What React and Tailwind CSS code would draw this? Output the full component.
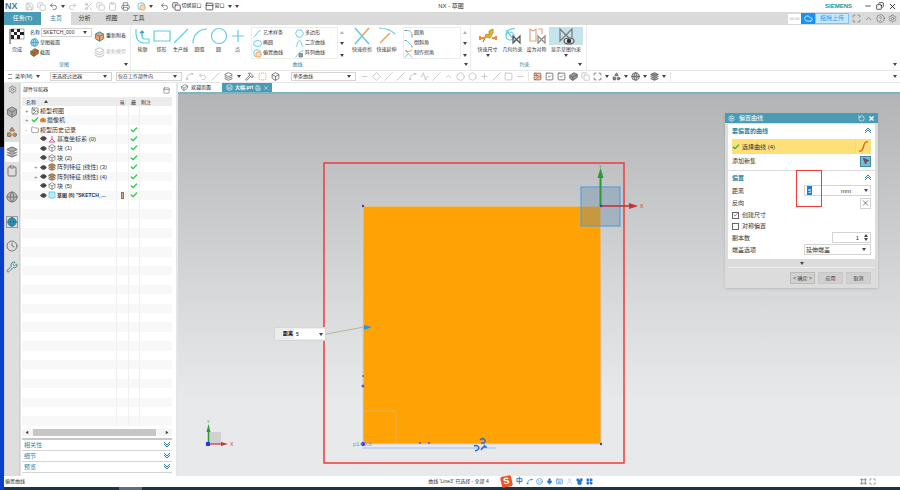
import clsx from 'clsx';
import {
  Box, Camera, Check, ChevronUp, CircleHelp, Circle, Clipboard, Clock, Cloud, Copy, Cuboid,
  Diamond, Eye, Folder, Globe, Hammer, Image, Keyboard, Layers, Maximize, Mic, Minus,
  MousePointer2, MoveDiagonal, PanelTop, Plus, Redo2, RotateCcw, Save, Scissors,
  Settings, Shapes, Shirt, Smile, Spline, Square, SquareCheck, SquareDashed, Undo2,
  User, X, LayoutGrid, Printer, Slash, Activity, Hexagon, Frame, Wrench, Minimize2,
} from 'lucide-react';

const treeRows = [
  { name: '模型视图', expand: '+', level: 0, icon: 'view' },
  { name: '摄像机', expand: '+', level: 0, icon: 'camera' },
  { name: '模型历史记录', expand: '-', level: 0, icon: 'folder', ok: true },
  { name: '基准坐标系 (0)', level: 1, icon: 'datum', ok: true },
  { name: '块 (1)', level: 1, icon: 'block', ok: true },
  { name: '块 (2)', level: 1, icon: 'block', ok: true },
  { name: '阵列特征 [线性] (3)', expand: '+', level: 1, icon: 'pattern', ok: true },
  { name: '阵列特征 [线性] (4)', expand: '+', level: 1, icon: 'pattern', ok: true },
  { name: '块 (5)', level: 1, icon: 'block', ok: true },
  { name: '草图 (6) "SKETCH_...', level: 1, icon: 'sketch', ok: true, current: true },
];
const emptyRows = Array.from({ length: 24 }, (_, i) => i);

function Caret({ className }) {
  return (
    <svg viewBox="0 0 4 3" className={clsx('h-[3px] w-1 shrink-0 fill-[#444]', className)}>
      <path d="M0 0h4L2 3z" />
    </svg>
  );
}

function Dropdown({ label, value, className }) {
  return (
    <span className={clsx('flex items-center border border-[#d4d4d4] bg-white pr-1', className)}>
      <select aria-label={label} className="h-full min-w-0 flex-1 appearance-none px-px outline-none">
        <option>{value}</option>
      </select>
      <Caret />
    </span>
  );
}

/* ========== リボン用アイコン ========== */
function CurveIcon({ kind, className = 'size-[18px]' }) {
  const blue = '#62cde6';
  return (
    <svg viewBox="0 0 18 18" fill="none" stroke={blue} strokeWidth="1.2" className={className}>
      {kind === 'profile' && (
        <>
          <path d="M2 2v5c0 5 3 9 8 9h5v-4h-4c-2 0-3-1-3-3" />
          <path d="M8 9V4M6 6l2-2 2 2" stroke="#2d9fd0" />
        </>
      )}
      {kind === 'rect' && <path d="M1 4h16v10H1z" />}
      {kind === 'line' && <path d="M2 16 16 2" />}
      {kind === 'arc' && <path d="M2 16C2 8 8 2 16 2" />}
      {kind === 'circle' && <circle cx="9" cy="9" r="7.5" />}
      {kind === 'point' && <path d="M9 3v12M3 9h12" />}
      {kind === 'spline' && <path d="M1 16C7 15 6 5 16 3" strokeWidth="2" />}
      {kind === 'ellipse' && <ellipse cx="9" cy="9" rx="8" ry="6" strokeWidth="2" />}
      {kind === 'offset' && (
        <>
          <rect x="2" y="2" width="13" height="13" rx="4" strokeWidth="2" />
          <rect x="6" y="6" width="10" height="10" rx="3" stroke="#f2a45c" fill="#fbd9b4" strokeWidth="2" />
        </>
      )}
      {kind === 'polygon' && <path d="M5 2h8l4 7-4 7H5L1 9z" strokeWidth="2" />}
      {kind === 'conic' && <path d="M2 16C5 13 5 3 9 3s4 10 7 13" strokeWidth="2" />}
      {kind === 'pattern' && (
        <>
          <path d="M1 16C6 14 8 4 16 3" strokeWidth="2" />
          <path d="M8 9h7v7H8z" stroke="#666" fill="#999" />
        </>
      )}
      {kind === 'trim' && (
        <>
          <path d="m2 1 14 16M9 9l-7 8" strokeWidth="1.6" />
          <path d="m9 9 7-8" stroke="#f2a45c" strokeWidth="1.6" />
        </>
      )}
      {kind === 'extend' && (
        <>
          <path d="M1 1c6 0 12 2 16 6" />
          <path d="M2 16 12 6" stroke="#f2a45c" strokeWidth="1.6" />
        </>
      )}
      {kind === 'fillet' && (
        <>
          <path d="M1 3h5M16 11v6" stroke="#888" strokeWidth="2" />
          <path d="M6 3c6 0 10 3 10 9" strokeWidth="2" />
        </>
      )}
      {kind === 'chamfer' && (
        <>
          <path d="M1 3h4M16 14v3" stroke="#888" strokeWidth="2" />
          <path d="m5 3 11 11" strokeWidth="2" />
        </>
      )}
      {kind === 'corner' && (
        <>
          <path d="m2 2 14 15M9 9l-7 8" strokeWidth="2" />
          <path d="M3 2c2 4 10 4 13-1" stroke="#f08030" strokeWidth="2" />
        </>
      )}
      {kind === 'dimension' && (
        <>
          <path d="M1 11h4M13 11h4M1 9v4M17 9v4" stroke="#f08a3c" strokeWidth="2" />
          <path d="m4 15 3-8 3 1V4l4-2v4l-3 5-4-1z" fill="#e8b422" stroke="#a67c10" strokeWidth=".7" />
        </>
      )}
      {kind === 'geometric' && (
        <>
          <path d="M2 8C2 3 8 1 11 2M2 3l9 11" />
          <circle cx="6" cy="9" r="4" />
          <path d="M9 9v7l7-7v7z" stroke="#555" />
        </>
      )}
      {kind === 'symmetric' && (
        <>
          <path d="M2 14V2l3 2 3-2v12zM10 2h4v5" stroke="#e0a58a" />
          <path d="M10 9v7l7-7v7z" stroke="#888" />
        </>
      )}
      {kind === 'show' && (
        <>
          <path d="M3 2v12L15 2v12z" stroke="#777" />
          <ellipse cx="12" cy="14" rx="5" ry="3" fill="#ddd" stroke="#555" />
          <circle cx="12" cy="14" r="1.6" fill="#333" stroke="#333" />
        </>
      )}
    </svg>
  );
}

function CheckeredFlag() {
  return (
    <svg viewBox="0 0 16 16" className="size-4">
      <path d="M1 1v15" stroke="#444" />
      <path d="M2 1h13v10H2z" fill="#fff" stroke="#555" strokeWidth=".5" />
      <path d="M2 1h3v3H2zM8 1h3v3H8zM5 4h3v3H5zM11 4h4v3h-4zM2 7h3v4H2zM8 7h3v4H8z" fill="#222" />
    </svg>
  );
}

function TallButton({ kind, label, className, caret }) {
  return (
    <button className={clsx('flex shrink-0 flex-col items-center', className)}>
      <CurveIcon kind={kind} />
      <span className="mt-px whitespace-nowrap leading-[7px]">{label}</span>
      {caret && <Caret className="mt-px" />}
    </button>
  );
}

function SmallButton({ kind, label }) {
  return (
    <button className="flex items-center gap-px whitespace-nowrap">
      <CurveIcon kind={kind} className="size-[9px] shrink-0" />
      {label}
    </button>
  );
}

function GalleryScroll() {
  return (
    <div className="flex w-2 flex-col items-center justify-around">
      <Caret className="rotate-180 opacity-40" />
      <Caret />
      <Caret />
    </div>
  );
}

function TitleBar() {
  const icon = 'size-[9px] shrink-0';
  return (
    <header className="flex h-3 items-center bg-white text-[5px]">
      <div className="flex flex-1 items-center gap-[3px] pl-px text-[#666]">
        <span className="mr-1 text-[9px] font-bold leading-3 text-[#4a7a92]">NX</span>
        <Save className={clsx(icon, 'text-[#bbb]')} />
        <Copy className={clsx(icon, 'text-[#bbb]')} />
        <Undo2 className={icon} />
        <Caret />
        <Redo2 className={clsx(icon, 'text-[#bbb]')} />
        <Scissors className={clsx(icon, 'ml-1 text-[#bbb]')} />
        <Copy className={clsx(icon, 'text-[#bbb]')} />
        <Clipboard className={clsx(icon, 'text-[#bbb]')} />
        <Printer className={clsx(icon, 'ml-px')} />
        <CurveIcon kind="offset" className="ml-1 size-[9px]" />
        <Caret />
        <Undo2 className={clsx(icon, 'ml-1')} />
        <button className="flex items-center gap-px whitespace-nowrap text-[#333]">
          <Copy className={icon} />切换窗口
        </button>
        <button className="flex items-center gap-px whitespace-nowrap text-[#333]">
          <PanelTop className={icon} />窗口
        </button>
        <Caret />
        <Caret />
      </div>
      <h1 className="text-[6px] text-[#333]">NX - 草图</h1>
      <div className="flex flex-1 items-center justify-end gap-1 pr-[3px]">
        <span className="mr-2 text-[6px] font-bold text-[#159a94]">SIEMENS</span>
        <button aria-label="最小化"><Minus className="size-2" /></button>
        <button aria-label="还原"><Copy className="size-2 rotate-90" /></button>
        <button aria-label="关闭"><X className="size-[9px]" /></button>
      </div>
    </header>
  );
}

function RibbonTabs() {
  return (
    <nav className="flex h-[13px] items-stretch bg-[#dadada] text-[6px] text-[#333]">
      <button className="w-[37px] bg-[#4a9cb6] text-white">任务(T)</button>
      <button className="w-[30px] bg-white text-[#2a86a5]">主页</button>
      <button className="w-[27px]">分析</button>
      <button className="w-[27px]">视图</button>
      <button className="w-[27px]">工具</button>
      <div className="ml-auto flex items-center pr-[3px] text-[#777]">
        <span className="h-[10px] w-[13px] bg-white text-center text-[4px] leading-[10px] text-[#aaa]">00:00</span>
        <span className="flex h-[11px] w-[14px] items-center justify-center bg-[#1890fa] text-white">
          <Cloud className="size-[9px]" />
        </span>
        <button className="h-[11px] w-[34px] border border-[#7cc4f5] bg-[#c4e8fd] text-[6px] leading-[9px] text-[#2d9ff0]">拖拽上传</button>
        <Maximize className="ml-[3px] size-[9px]" />
        <ChevronUp className="ml-[3px] size-[9px]" />
        <CircleHelp className="ml-[3px] size-[9px]" />
        <Settings className="ml-[3px] size-[9px]" />
      </div>
    </nav>
  );
}

function Ribbon() {
  return (
    <section className="flex h-[45px] items-stretch bg-white text-[5px] text-[#333]">
      {/* 草图 */}
      <div className="flex w-[124px] flex-col">
        <div className="flex h-9 pt-[3px]">
          <button className="flex w-[26px] flex-col items-center">
            <CheckeredFlag />
            <span className="mt-[2px] leading-[7px]">完成</span>
          </button>
          <div className="flex w-[62px] flex-col gap-px">
            <label className="flex h-[9px] items-center gap-px whitespace-nowrap">
              名称
              <Dropdown label="名称" value="SKETCH_000" className="h-[9px] min-w-0 flex-1" />
            </label>
            <button className="flex h-[9px] items-center gap-px">
              <Globe className="size-[9px] fill-[#a8d8ea] text-[#3a9ac0]" />草图截面
            </button>
            <button className="flex h-[9px] items-center gap-px">
              <Cuboid className="size-[9px] fill-[#d8622e] text-[#3d6b35]" />截面
            </button>
          </div>
          <div className="flex flex-1 flex-col pl-[2px]">
            <button className="flex h-4 items-center gap-px whitespace-nowrap">
              <Box className="size-[11px] fill-[#f0a060] text-[#3a8aa8]" />重新附着
            </button>
            <button className="flex h-4 items-center gap-px whitespace-nowrap text-[#bbb]">
              <Layers className="size-[11px]" />更新模型
            </button>
          </div>
        </div>
        <div className="flex items-center">
          <span className="flex-1 text-center text-[#2a7f9e]">草图</span>
          <Caret />
        </div>
      </div>

      {/* 曲线 */}
      <div className="ml-[2px] flex w-[340px] flex-col border-l border-[#ececec]">
        <div className="flex h-9 pl-[2px] pt-[2px]">
          <TallButton kind="profile" label="轮廓" className="w-[19px]" />
          <TallButton kind="rect" label="矩形" className="w-[19px]" />
          <TallButton kind="line" label="生产线" className="w-[19px]" />
          <TallButton kind="arc" label="圆弧" className="w-[19px]" />
          <TallButton kind="circle" label="圆" className="w-[19px]" />
          <TallButton kind="point" label="点" className="w-[19px]" />
          <div className="ml-1 grid h-8 w-[87px] grid-cols-2 border border-[#ececec] pl-px">
            <SmallButton kind="spline" label="艺术样条" />
            <SmallButton kind="polygon" label="多边形" />
            <SmallButton kind="ellipse" label="椭圆" />
            <SmallButton kind="conic" label="二次曲线" />
            <SmallButton kind="offset" label="偏置曲线" />
            <SmallButton kind="pattern" label="阵列曲线" />
          </div>
          <GalleryScroll />
          <TallButton kind="trim" label="快速修剪" className="ml-1 w-6" />
          <TallButton kind="extend" label="快速延伸" className="w-[25px]" />
          <div className="ml-1 grid h-8 w-[58px] grid-cols-1 border border-[#ececec]">
            <SmallButton kind="fillet" label="圆角" />
            <SmallButton kind="chamfer" label="倒斜角" />
            <SmallButton kind="corner" label="制作拐角" />
          </div>
          <GalleryScroll />
        </div>
        <div className="flex items-center pr-[2px]">
          <span className="flex-1 text-center text-[#2a7f9e]">曲线</span>
          <Caret />
        </div>
      </div>

      {/* 约束 */}
      <div className="flex w-[117px] flex-col border-x border-[#ececec]">
        <div className="flex h-9 pl-1 pt-[2px]">
          <TallButton kind="dimension" label="快速尺寸" className="w-[25px]" caret />
          <TallButton kind="geometric" label="几何约束" className="w-[25px]" />
          <TallButton kind="symmetric" label="设为对称" className="w-[23px]" />
          <button className="ml-px flex w-[34px] shrink-0 flex-col items-center">
            <span className="flex w-full justify-center bg-[#c5e3ea]"><CurveIcon kind="show" /></span>
            <span className="mt-px whitespace-nowrap leading-[7px]">显示草图约束</span>
            <Caret className="mt-px" />
          </button>
        </div>
        <div className="flex items-center pr-1">
          <span className="flex-1 text-center text-[#2a7f9e]">约束</span>
          <Caret />
        </div>
      </div>
      <Caret className="mb-1 ml-auto mr-[3px] self-end" />
    </section>
  );
}

function SelectionBar() {
  const dim = 'size-[9px] shrink-0 text-[#bbb]';
  const dark = 'size-[9px] shrink-0 text-[#555]';
  return (
    <section className="flex h-3 items-center border-t border-[#e8e8e8] bg-white text-[5px] text-[#333]">
      <button className="flex w-[46px] items-center gap-[3px] pl-1">
        <span className="h-[5px] w-1 border-y border-[#999]" />菜单(M)<Caret />
      </button>
      <Dropdown label="选择过滤器" value="无选择过滤器" className="h-[9px] w-[62px]" />
      <Dropdown label="选择范围" value="仅在工作部件内" className="ml-1 h-[9px] w-[66px]" />
      <div className="flex w-[109px] items-center gap-1 pl-[3px]">
        <Spline className={dim} />
        <Undo2 className={dim} />
        <Slash className={dim} />
        <Layers className={dark} />
        <Caret />
        <Hammer className={dark} />
        <SquareDashed className="size-[9px] shrink-0 text-[#ef8a3a]" />
        <Box className={dark} />
      </div>
      <Dropdown label="曲线规则" value="单条曲线" className="h-[9px] w-[65px]" />
      <div className="flex w-[172px] items-center gap-[3px] pl-1">
        <Minus className={dim} />
        <Diamond className={dim} />
        <Slash className={dim} />
        <Slash className={dim} />
        <Spline className={dim} />
        <Activity className={dim} />
        <Slash className={dim} />
        <ChevronUp className={dim} />
        <Circle className={dim} />
        <Hexagon className={dim} />
        <Plus className={dim} />
        <Slash className={dim} />
        <Square className={dim} />
        <Minus className={dim} />
      </div>
      <div className="flex items-center gap-[3px] border-x border-[#e8e8e8] px-1">
        <Image className="size-[9px] shrink-0 fill-[#f0c8a8] text-[#8a5a40]" />
        <SquareCheck className={dark} />
        <SquareCheck className={dark} />
        <Cuboid className={clsx(dark, 'fill-[#999]')} />
        <Copy className={dim} />
        <Maximize className={dark} />
        <Caret />
        <Shapes className={clsx(dark, 'fill-[#888]')} />
        <Caret />
        <Globe className={clsx(dark, 'fill-[#ccc]')} />
        <Caret />
        <Layers className={clsx(dark, 'fill-[#888]')} />
        <Caret />
      </div>
      <Caret className="ml-auto mr-[3px]" />
    </section>
  );
}

function ResourceBar() {
  const icon = 'size-3';
  return (
    <aside className="flex w-4 shrink-0 flex-col items-center border-x border-[#cfcfcf] bg-[#dedede] text-[#777]">
      <Settings className="mt-[2px] size-[9px]" />
      <button aria-label="装配导航器" className="mt-3"><Box className={clsx(icon, 'fill-[#aaa]')} /></button>
      <button aria-label="约束导航器" className="mt-2"><Shapes className={clsx(icon, 'fill-[#f08a2c]')} /></button>
      <button aria-label="部件导航器" className="mt-1 flex h-5 w-[14px] items-center justify-center bg-white">
        <Layers className={clsx(icon, 'fill-[#aaa]')} />
      </button>
      <button aria-label="重用库" className="mt-[3px]"><Clipboard className={icon} /></button>
      <button aria-label="视图管理器" className="mt-[14px]"><Globe className={clsx(icon, 'fill-[#bbb]')} /></button>
      <button aria-label="浏览器" className="mt-[13px]"><Globe className="size-3 border border-[#999] fill-[#35a0c4] text-[#1f6d8c]" /></button>
      <button aria-label="历史记录" className="mt-3"><Clock className={icon} /></button>
      <button aria-label="工具箱" className="mt-[9px]"><Wrench className="size-3 text-[#4c8a8c]" /></button>
    </aside>
  );
}

function TreeIcon({ icon }) {
  const size = 'size-2 shrink-0';
  if (icon === 'view') return <Image className={clsx(size, 'text-[#555]')} />;
  if (icon === 'camera') {
    return (
      <>
        <Check className={clsx(size, 'text-[#2fcf48]')} strokeWidth={4} />
        <Camera className="size-[6px] shrink-0 fill-[#ef8a3a] text-[#b56a2c]" />
      </>
    );
  }
  if (icon === 'folder') return <Folder className={clsx(size, 'text-[#777]')} />;
  if (icon === 'datum') {
    return (
      <svg viewBox="0 0 8 8" className={size} fill="#fff" stroke="#e0568a">
        <path d="M4 1v3L1 7h6L4 4" />
      </svg>
    );
  }
  if (icon === 'block') return <Box className={clsx(size, 'text-[#666]')} />;
  if (icon === 'pattern') return <Layers className={clsx(size, 'fill-[#ef7a2a] text-[#555]')} />;
  return <Square className={clsx(size, 'fill-[#b5ecf8] text-[#4ac4e0]')} />;
}

function PartNavigator() {
  return (
    <aside className="flex w-[156px] shrink-0 flex-col border-l border-[#e4e4e4] bg-white pl-px pr-1 text-[6px] text-[#333]">
      <div className="flex h-[14px] items-center justify-between pl-px pr-[2px]">
        <h2 className="text-[5px]">部件导航器</h2>
        <PanelTop className="size-[7px] text-[#666]" />
      </div>
      <div className="min-h-0 flex-1 overflow-hidden">
        <table className="h-full w-full table-fixed border-collapse leading-2">
          <thead>
            <tr className="h-[9px] bg-[#ececec] text-left text-[5px]">
              <th className="w-[94px] p-0 pl-1 font-normal">
                <span className="flex items-center gap-2">名称<Caret className="rotate-180" /></span>
              </th>
              <th className="w-3 p-0 text-center font-normal">当</th>
              <th className="w-[11px] p-0 text-center font-normal">最</th>
              <th className="p-0 pl-[2px] font-normal">附注</th>
            </tr>
          </thead>
          <tbody>
            {treeRows.map((row, i) => (
              <tr key={i} className="h-[9px] odd:bg-white even:bg-[#f8f8f8]">
                <td className="border-r border-[#f0f0f0] p-0">
                  <span className={clsx('flex items-center gap-px overflow-hidden whitespace-nowrap', row.level === 0 ? 'pl-[3px]' : 'pl-3', row.current && 'text-[5px] font-bold')}>
                    <span className="w-[5px] shrink-0 text-[#777]">{row.expand}</span>
                    {row.level === 1 && <Eye className="size-[7px] shrink-0 fill-[#555] text-[#333]" />}
                    <TreeIcon icon={row.icon} />
                    {row.name}
                  </span>
                </td>
                <td className="border-r border-[#f0f0f0] p-0">
                  {row.current && <span className="mx-auto block h-[7px] w-[3px] border border-[#777] bg-[#f0a878]" />}
                </td>
                <td className="border-r border-[#f0f0f0] p-0">
                  {row.ok && <Check className="mx-auto size-2 text-[#2fcf48]" strokeWidth={4} />}
                </td>
                <td className="p-0" />
              </tr>
            ))}
            {emptyRows.map((i) => (
              <tr key={i} className="h-[9px] odd:bg-white even:bg-[#f8f8f8]">
                <td className="border-r border-[#f0f0f0] p-0" />
                <td className="border-r border-[#f0f0f0] p-0" />
                <td className="border-r border-[#f0f0f0] p-0" />
                <td className="p-0" />
              </tr>
            ))}
          </tbody>
        </table>
      </div>
      <div className="mt-[3px] flex h-[7px] items-center gap-1 bg-[#f4f4f4] px-[3px]">
        <Caret className="rotate-90" />
        <span className="h-full w-[123px] bg-[#c6c6c6]" />
        <Caret className="ml-auto -rotate-90" />
      </div>
      <div className="mt-[2px] h-[2px] bg-[#c8c8c8]" />
      {['相关性', '细节', '预览'].map((title) => (
        <button key={title} className="flex h-[11px] items-center justify-between border-b border-[#d4d4d4] px-[2px] text-[#2a86a5]">
          {title}
          <svg viewBox="0 0 6 6" className="size-[6px]" fill="none" stroke="#2a86a5">
            <path d="m0 0 3 3 3-3M0 2l3 3 3-3" />
          </svg>
        </button>
      ))}
      <div className="h-[3px]" />
    </aside>
  );
}

function SketchView() {
  return (
    <svg viewBox="0 0 722 382" preserveAspectRatio="xMinYMin slice" className="block h-full w-full">
      <rect x="185" y="112" width="238" height="238" fill="#ffa305" stroke="#c9cfe6" />
      <path d="M186 317h32v32" fill="none" stroke="#e0b060" />
      <rect x="146" y="69" width="300" height="300" fill="none" stroke="#f23a3a" strokeWidth="1.5" />

      {/* 坐标系 */}
      <rect x="403" y="93" width="39" height="39" fill="#5b87a8" fillOpacity=".35" stroke="#55a0e0" strokeWidth="1.2" />
      <path d="M422.5 112V84" stroke="#2b9a36" strokeWidth="2" />
      <path d="m422.5 74 3 10h-6z" fill="#2b9a36" />
      <path d="M423 112h30" stroke="#c8323c" strokeWidth="1.6" />
      <path d="m460 112-9-3v6z" fill="#c8323c" />
      <text x="462" y="114" fontSize="5" fill="#d03c3c">X</text>
      <text x="421" y="74" fontSize="4" fill="#2b9a36">Y</text>
      <circle cx="423" cy="112" r="1.3" fill="#3340c0" />
      <circle cx="185" cy="112" r="1.2" fill="#3340c0" />
      <circle cx="423" cy="350" r="1.2" fill="#3340c0" />

      {/* 偏置方向 */}
      <path d="m148 240 38-7" stroke="#bcb498" />
      <path d="m186 231 8 2-8 3z" fill="#2d95d8" />

      {/* 尺寸与约束符号 */}
      <path d="M184 354h134" stroke="#a9bfe8" />
      <g fill="#6a5ac8">
        <circle cx="185" cy="282" r="1" />
        <circle cx="185" cy="292" r="1.5" />
        <circle cx="242" cy="349" r="1" />
        <circle cx="251" cy="349" r="1" />
      </g>
      <circle cx="185" cy="350" r="2" fill="#1c22e0" />
      <text x="175" y="352" fontSize="6" fill="#7b92cc">p1=5.5</text>
      <path d="M302 346c3-3 7 0 4 3h-3M296 352c4-2 8 3 1 5M303 356l4-5M306 353h3" fill="none" stroke="#3567c8" strokeWidth="1.5" />

      {/* 左下角三轴 */}
      <rect x="31" y="338" width="12" height="12" fill="#cfd1d2" />
      <path d="M30.5 350v-13" stroke="#2b9a36" strokeWidth="1.5" />
      <path d="m30.5 330 2 8h-4z" fill="#2b9a36" />
      <path d="M30 350h14" stroke="#c8323c" strokeWidth="1.2" />
      <path d="m50 350-7-2v4z" fill="#c8323c" />
      <rect x="28" y="348" width="4" height="4" fill="#1c3de0" />
      <text x="52" y="352" fontSize="5" fill="#d03c3c">X</text>
      <text x="29" y="329" fontSize="4" fill="#2b9a36">Y</text>
    </svg>
  );
}

function SectionTitle({ children }) {
  return (
    <h3 className="flex h-[14px] items-center justify-between px-1 text-[6px] font-bold text-[#2a86a5]">
      {children}
      <svg viewBox="0 0 6 6" className="size-[6px]" fill="none" stroke="#2a86a5">
        <path d="m0 3 3-3 3 3M0 5l3-3 3 3" />
      </svg>
    </h3>
  );
}

function OffsetDialog() {
  return (
    <div role="dialog" aria-label="偏置曲线" className="absolute right-[22px] top-[19px] w-[153px] bg-[#dcdcdc] text-[6px] leading-2 text-[#333] shadow">
      <div className="flex h-[10px] items-center bg-[#4a9cb6] px-[3px] text-white">
        <Settings className="size-[7px]" />
        <h2 className="ml-1 flex-1">偏置曲线</h2>
        <button aria-label="重置"><RotateCcw className="size-[7px]" /></button>
        <button aria-label="关闭" className="ml-[3px]"><X className="size-[7px]" strokeWidth={4} /></button>
      </div>

      <div className="mx-[3px] mt-px bg-white pb-[3px]">
        <SectionTitle>要偏置的曲线</SectionTitle>
        <div className="mx-1 mt-px flex h-[15px] bg-[#ffdf78]">
          <div className="flex flex-1 items-center gap-[2px] border-r border-[#e8d9a0]">
            <Check className="size-2 text-[#2fb848]" strokeWidth={4} />选择曲线 (4)
          </div>
          <button aria-label="选择曲线" className="flex w-[15px] items-center justify-center">
            <svg viewBox="0 0 12 12" className="size-[11px]" fill="none" stroke="#d8622e" strokeWidth="1.5">
              <path d="M1 11h2C6 11 6 1 9 1h2" />
            </svg>
          </button>
        </div>
        <div className="mx-1 mt-px flex h-3 items-center justify-between">
          添加新集
          <button aria-label="添加新集" className="flex size-[11px] items-center justify-center border border-[#3c8ca6] bg-[#7dbccf]">
            <MousePointer2 className="size-2 fill-[#a83c4c] text-[#2a4a80]" />
          </button>
        </div>
      </div>

      <div className="relative mx-[3px] mt-px bg-white pb-1">
        <SectionTitle>偏置</SectionTitle>
        <div className="flex flex-col gap-px px-1">
          <div className="flex h-[11px] items-center">
            <label htmlFor="distance" className="w-[72px]">距离</label>
            <span className="flex h-[11px] flex-1 items-center border border-[#d4d4d4] px-[2px]">
              <input id="distance" defaultValue="5" className="h-[9px] w-[5px] bg-[#1e7ad8] px-px text-white outline-none" />
              <select aria-label="单位" className="ml-auto mr-3 w-[11px] appearance-none outline-none">
                <option>mm</option>
              </select>
              <Caret />
            </span>
          </div>
          <div className="flex h-3 items-center justify-between">
            反向
            <button aria-label="反向" className="flex size-[11px] items-center justify-center border border-[#d4d4d4]">
              <X className="size-[10px] text-[#555]" />
            </button>
          </div>
          <label className="flex h-[10px] items-center gap-[3px]">
            <input type="checkbox" defaultChecked className="peer sr-only" />
            <span className="flex size-[7px] items-center justify-center border border-[#666]">
              <Check className="size-[6px]" strokeWidth={3} />
            </span>
            创建尺寸
          </label>
          <label className="flex h-[10px] items-center gap-[3px]">
            <input type="checkbox" className="peer sr-only" />
            <span className="size-[7px] border border-[#666]" />
            对称偏置
          </label>
          <div className="flex h-[11px] items-center justify-between">
            <label htmlFor="copies">副本数</label>
            <span className="flex h-[11px] w-[39px] items-center border border-[#d4d4d4] pr-[2px]">
              <input id="copies" defaultValue="1" className="w-full min-w-0 pr-[5px] text-right outline-none" />
              <span className="flex flex-col gap-px">
                <Caret className="rotate-180" />
                <Caret />
              </span>
            </span>
          </div>
          <div className="flex h-[11px] items-center">
            <span className="w-[72px]">端盖选项</span>
            <Dropdown label="端盖选项" value="延伸端盖" className="h-[11px] flex-1" />
          </div>
        </div>
        <div className="pointer-events-none absolute left-[68px] -top-px h-[37px] w-[26px] border border-[#f23a3a]" />
      </div>

      <div className="mx-[3px] mt-px flex h-2 items-center justify-center border-b border-[#eee]">
        <Caret />
      </div>
      <div className="flex justify-end gap-[3px] pb-1 pr-[7px] pt-1">
        <button className="h-3 w-[25px] whitespace-nowrap border border-[#bbb] bg-[#d0d0d0] text-[5px] leading-2">&lt; 确定 &gt;</button>
        <button className="h-3 w-[25px] border border-[#c8c8c8] bg-[#d0d0d0] text-[5px] leading-2">应用</button>
        <button className="h-3 w-[25px] border border-[#c8c8c8] bg-[#d0d0d0] text-[5px] leading-2">取消</button>
      </div>
    </div>
  );
}

function Workspace() {
  return (
    <main className="ml-[2px] flex min-w-0 flex-1 flex-col">
      <div className="flex h-[11px] shrink-0 items-stretch border-b-2 border-[#7fb4c4] bg-white text-[5px]">
        <button className="flex w-11 items-center gap-[3px] pl-[3px]">
          <Cuboid className="size-[7px] text-[#555]" />欢迎页面
        </button>
        <div className="flex w-[50px] items-center gap-[2px] bg-[#4a9cb6] pl-1 text-white">
          <Layers className="size-[7px]" />
          <span className="font-bold">大幅.prt</span>
          <Save className="size-[6px]" />
          <button aria-label="关闭文件"><X className="size-[6px]" /></button>
        </div>
      </div>
      <div className="relative min-h-0 flex-1 overflow-hidden bg-linear-to-b from-[#b3b4b6] via-[#d5d7d9] via-50% to-[#e7e9eb] to-80%">
        <SketchView />
        <label className="absolute left-24 top-[233px] flex h-[14px] w-[52px] items-center border border-[#d6d6d6] bg-[#ededed] pl-2 text-[5px]">
          <span className="whitespace-nowrap font-bold">距离</span>
          <input defaultValue="5" className="ml-px h-[10px] w-full min-w-0 bg-white pl-[2px] outline-none" />
          <span className="flex h-[10px] items-center bg-white pr-[2px]"><Caret /></span>
        </label>
        <OffsetDialog />
      </div>
    </main>
  );
}

function StatusBar() {
  const icon = 'size-[7px]';
  return (
    <footer className="flex h-[11px] shrink-0 items-center bg-white text-[5px] text-[#333]">
      <span className="flex-1 pl-px">偏置曲线</span>
      <span className="ml-6 mr-3">曲线 'Line3' 已选择 - 全部 4</span>
      <div className="flex flex-1 items-center gap-[3px] text-[#1f78d0]">
        <span className="flex size-[11px] -rotate-12 items-center justify-center rounded-xs bg-[#ee5528] text-[9px] font-bold leading-none text-white">S</span>
        <span className="ml-px text-[7px] font-bold">中</span>
        <Spline className={icon} />
        <Smile className={icon} />
        <Mic className={clsx(icon, 'fill-[#1f78d0]')} />
        <Keyboard className={icon} />
        <User className={clsx(icon, 'text-[#a8c4e4]')} />
        <Shirt className={clsx(icon, 'fill-[#1f78d0]')} />
        <LayoutGrid className={clsx(icon, 'fill-[#1f78d0]')} />
        <span className="ml-auto flex gap-[2px] pr-6 text-[#555]">
          <Frame className={icon} />
          <Maximize className={icon} />
        </span>
      </div>
    </footer>
  );
}

export default function App() {
  return (
    <div className="flex h-screen overflow-hidden bg-[#e4e6e7] font-['Liberation_Sans','Noto_Sans_CJK_SC',sans-serif]">
      {/* デスクトップの端 */}
      <div className="flex w-1 shrink-0 flex-col bg-[#0a3fc8]">
        <div className="h-[30%] bg-black" />
      </div>
      <div className="flex min-w-0 flex-1 flex-col">
        <TitleBar />
        <RibbonTabs />
        <Ribbon />
        <SelectionBar />
        <div className="mt-px flex min-h-0 flex-1">
          <ResourceBar />
          <PartNavigator />
          <Workspace />
        </div>
        <StatusBar />
        <div className="flex h-[3px] shrink-0 bg-[#1d3444]">
          <span className="ml-[115px] w-[23px] bg-[#5c6f7c]" />
        </div>
      </div>
    </div>
  );
}
